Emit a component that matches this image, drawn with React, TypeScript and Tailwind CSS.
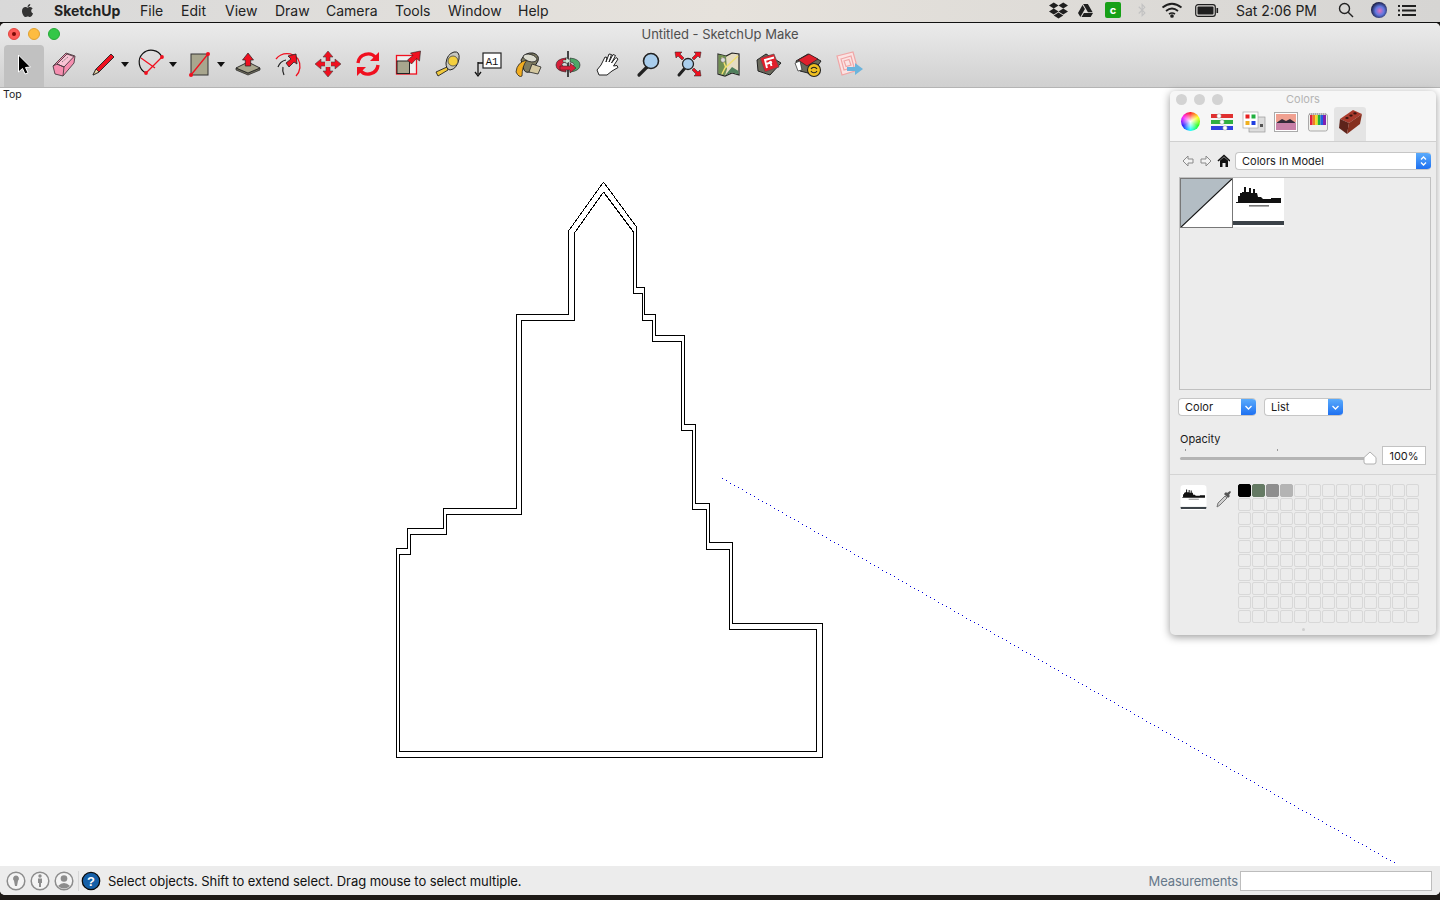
import React from "react";
import { FaApple, FaDropbox, FaGoogleDrive, FaBluetoothB } from "react-icons/fa";

const outer = "603.5,182 636.5,227 636.5,287.5 644.5,287.5 644.5,314.5 655.5,314.5 655.5,335.5 684.5,335.5 684.5,424.5 695.5,424.5 695.5,503.5 709.5,503.5 709.5,542.5 732.5,542.5 732.5,623.5 822.5,623.5 822.5,757.5 396.5,757.5 396.5,548.5 407.5,548.5 407.5,528.5 443.5,528.5 443.5,508.5 516.5,508.5 516.5,314.5 568.5,314.5 568.5,231 603.5,182";
const inner = "603.5,192 633.5,232 633.5,293.5 642.5,293.5 642.5,320.5 652.5,320.5 652.5,341.5 681.5,341.5 681.5,430.5 692.5,430.5 692.5,509.5 706.5,509.5 706.5,549.5 729.5,549.5 729.5,629.5 816.5,629.5 816.5,751.5 399.5,751.5 399.5,554.5 410.5,554.5 410.5,534.5 446.5,534.5 446.5,514.5 521.5,514.5 521.5,320.5 574.5,320.5 574.5,233 603.5,192";

const dots = Array.from({ length: 169 }, (_, i) => ({
  x: Math.round(722 + i * 4),
  y: Math.round(478 + i * 4 * (385 / 673)),
}));

const Ic = ({ children, s = 32 }: { children: React.ReactNode; s?: number }) => (
  <svg width={s} height={s} viewBox="0 0 32 32" className="block shrink-0">{children}</svg>
);

const R = "#f0101f";
const O = "#a8a68e";

const icons: Record<string, React.ReactNode> = {
  select: <path d="M10.5 7 L10.5 24 L14.5 20.5 L17 26 L20 24.8 L17.5 19.5 L22.5 19 Z" fill="#000" stroke="#fff" strokeWidth="1" />,
  eraser: <g stroke="#4a3a40" strokeWidth=".9"><path d="M5 18 L18 5 L27 8 L26 15 L15 28 L7 26 Z" fill="#f58fb0" /><path d="M9 16 L19 6 L26 8.5 L16 19 Z" fill="#f9c3d4" /><path d="M5 18 L9 16 L16 19 L15 28" fill="none" /><path d="M14 14 L20 9" stroke="#777" strokeDasharray="1.4 .8" /></g>,
  pencil: <g><path d="M5 27 L8 21 L23 6 L26 9 L11 24 Z" fill={R} stroke="#222" strokeWidth=".9" /><path d="M5 27 L8 21 L11 24 Z" fill="#e8d8a8" stroke="#222" strokeWidth=".8" /></g>,
  arc: <g fill="none"><path d="M10 25 A12 12 0 1 1 26 9" stroke="#111" strokeWidth="1.2" /><path d="M10 25 L26 9 M5 10 L19 20" stroke={R} strokeWidth="1.3" /><circle cx="10" cy="25" r="1.9" fill={R} /><circle cx="26" cy="9" r="1.9" fill={R} /></g>,
  rect: <g><rect x="7" y="6" width="17" height="21" fill={O} stroke="#333" strokeWidth="1" /><path d="M7 27 L24 6" stroke={R} strokeWidth="1.3" /><circle cx="7" cy="27" r="2" fill={R} /><circle cx="24" cy="6" r="2" fill={R} /></g>,
  push: <g><path d="M4 20 V22 L16 27 L28 22 V20 L16 25 Z" fill="#6f6d5c" stroke="#222" strokeWidth=".7" /><path d="M4 20 L16 14 L28 20 L16 25 Z" fill={O} stroke="#222" strokeWidth=".9" /><path d="M16 5 L21.5 12 H18.7 V18 H13.3 V12 H10.5 Z" fill={R} stroke="#222" strokeWidth=".7" /></g>,
  follow: <g fill="none"><path d="M4 11 A14 14 0 0 1 26 11 A14 14 0 0 1 24 28" stroke={R} strokeWidth="1.3" /><path d="M6 19 A11 11 0 0 1 14 12" stroke="#222" strokeWidth="1.2" /><path d="M12 27 A12 12 0 0 1 11 19" stroke="#222" strokeWidth="1.2" /><path d="M24 6 L25 16 L22 14 L17 19 L14 15 L19 11 L16 8 Z" fill={R} stroke="#222" strokeWidth=".8" /></g>,
  move: <g><path d="M16 3 L21 9 H18 V14 H23 V11 L29 16 L23 21 V18 H18 V23 H21 L16 29 L11 23 H14 V18 H9 V21 L3 16 L9 11 V14 H14 V9 H11 Z" fill={R} stroke="#444" strokeWidth=".6" /><rect x="13" y="13" width="6" height="6" fill="#cfcfc8" /></g>,
  rotate: <g fill="none" stroke={R} strokeWidth="3.4"><path d="M6 15 A10 10 0 0 1 24 10" /><path d="M26 17 A10 10 0 0 1 8 22" /><path d="M27 4 V13 H18 Z" fill={R} stroke="none" /><path d="M5 28 V19 H14 Z" fill={R} stroke="none" /></g>,
  scale: <g transform="translate(-1.5 0)"><rect x="6" y="7.5" width="20" height="18.5" fill="#eee" stroke={R} strokeWidth="1.3" /><rect x="6.5" y="13" width="12.5" height="12.5" fill={O} stroke="#222" strokeWidth="1" /><path d="M30 3 L29 13 L26 10.5 L21 16 L17 12 L22.5 7.5 L20 5 Z" fill={R} stroke="#222" strokeWidth=".6" /></g>,
  tape: <g transform="translate(-1 0)"><path d="M5 24 L16 19 L17 22 L7 28 Z" fill="#f0c93c" stroke="#222" strokeWidth=".9" /><path d="M15 15 Q16 6 23 4 Q29 3 28 11 Q26 21 19 22 Q15 21 15 15 Z" fill="#c8c8c0" stroke="#222" strokeWidth="1" /><circle cx="22" cy="13" r="5" fill="#f4d03f" stroke="#444" strokeWidth=".8" /></g>,
  text: <g><rect x="11" y="5" width="18" height="15" fill="#fff" stroke="#222" strokeWidth="1.2" /><text x="20" y="16.5" fontSize="10.5" textAnchor="middle" fontFamily="Liberation Mono" fill="#111">A1</text><path d="M6 14 V26 M3 24 L6 28 L9 24 M6 15 H11" stroke="#111" strokeWidth="1.3" fill="none" /></g>,
  paint: <g><path d="M9 12 Q13 4 21 5 Q28 7 26 13 L20 23 Q14 26 12 22 Z" fill="#7f7c60" stroke="#222" strokeWidth="1" /><ellipse cx="18" cy="10" rx="7" ry="3.6" fill="#dcdcd0" stroke="#222" strokeWidth=".8" transform="rotate(15 18 10)" /><path d="M4 24 Q5 14 15 12 Q10 18 10 28 Q7 30 4 24 Z" fill="#f2ad1f" stroke="#222" strokeWidth=".8" /><path d="M20 16 L29 19 L26 26 L17 24 Z" fill="#d4c8a0" stroke="#222" strokeWidth=".8" /></g>,
  orbit: <g><path d="M14 10 Q4 11 4 17 Q4 23 14 24 V19 Q10 19 10 16.5 Q10 14.5 14 14 Z" fill="#d8203a" stroke="#222" strokeWidth=".6" /><path d="M18 10 Q28 11 28 17 Q28 23 18 24 V19 Q22 19 22 16.5 Q22 14.5 18 14 Z" fill="#4ea868" stroke="#222" strokeWidth=".6" /><path d="M16 3 V29" stroke="#111" strokeWidth="1.5" /><path d="M8 18 H18 V15 L24 20 L18 25 V22 H8 Z" fill="#d8203a" stroke="#222" strokeWidth=".5" /><path d="M19 13 L14 9.5 V12 H11 V14 H14 V16 Z" fill="#cfe8d8" stroke="#222" strokeWidth=".4" /></g>,
  hand: <path d="M7 27 L5 22 L9 17 L13 9 L15 9.5 L14 14 L17 6 L19.5 6.5 L17 14 L21 6.5 L23.5 7.5 L19.5 15 L24 9.5 L26 11 L21.5 18 L25 17.5 L26 19.5 L20 23 L15 27 Z" fill="#fff" stroke="#222" strokeWidth="1" strokeLinejoin="round" />,
  zoom: <g><path d="M7 27 L15 19" stroke="#222" strokeWidth="3.2" strokeLinecap="round" /><circle cx="19" cy="13" r="7.5" fill="#a9cdec" stroke="#222" strokeWidth="1.6" /></g>,
  extents: <g><path d="M7 27 L13 20" stroke="#222" strokeWidth="3" strokeLinecap="round" /><circle cx="16" cy="16" r="5.5" fill="#a9cdec" stroke="#222" strokeWidth="1.3" /><path d="M3 4 L10 4 L8 6 L12 10 L10 12 L6 8 L4 10 Z M29 4 L22 4 L24 6 L20 10 L22 12 L26 8 L28 10 Z M29 28 L22 28 L24 26 L20 22 L22 20 L26 24 L28 22 Z" fill={R} stroke="#222" strokeWidth=".5" /></g>,
  map: <g><path d="M6 6 L14 8 L20 5 L27 6 V27 L20 25 L13 28 L6 26 Z" fill="#e5dcc2" stroke="#222" strokeWidth="1.2" /><path d="M6.5 6.5 L14 8 L15 21 L13 27.5 L6.5 25.5 Z" fill="#6f8f52" /><path d="M13 27.5 L20 19 L26.5 23 V26.5 L20 24.5 Z" fill="#4f7f5c" /><path d="M26 8 L13 20 L10 26 M10 9 L14 20" stroke="#f0e070" strokeWidth="1.5" fill="none" /><circle cx="11" cy="12" r="2.4" fill="#ddd" stroke="#555" strokeWidth=".5" /></g>,
  warehouse: <g><path d="M5 12 L14 6 L29 15 L18 27 L6 23 Z" fill="#6a6a5c" stroke="#222" strokeWidth="1" /><path d="M8 10 L22 6 L27 19 L13 24 Z" fill="#e0202c" stroke="#555" strokeWidth=".7" /><path d="M15 20 L13 12 L22 9.5 M14.2 16 L20 14 M19.5 18 L18 13" stroke="#fff" strokeWidth="1.9" fill="none" /></g>,
  ext: <g><path d="M4 13 L16 6 L29 13 L20 26 L8 23 Z" fill="#6a6a5c" stroke="#222" strokeWidth="1" /><path d="M6 12 L17 6 L26 11 L15 18 Z" fill="#e0202c" stroke="#222" strokeWidth=".7" /><path d="M3 15 L8 13 L10 22 L6 23 Z" fill="#fff" stroke="#222" strokeWidth=".7" /><circle cx="22" cy="22" r="6.5" fill="#f0c020" stroke="#222" strokeWidth="1.1" /><path d="M19 21 A3.4 3.4 0 0 1 25 21 M25 23 A3.4 3.4 0 0 1 19 23" stroke="#222" strokeWidth="1.1" fill="none" /></g>,
  layout: <g><path d="M5 8 L21 4 L26 22 L10 27 Z" fill="#fbe3e3" stroke="#f0a6a6" strokeWidth="1.2" /><path d="M9 11 L19 8 L22 19 L12 22 Z M12 13 L17 11.5 L19 17 L14 18.5 Z" fill="none" stroke="#f0a6a6" strokeWidth="1.2" /><path d="M15 19 H23 V15 L31 21 L23 27 V23 H15 Z" fill="#6cb4dc" /></g>,
};

const tools: [string, boolean][] = [
  ["eraser", false], ["pencil", true], ["arc", true], ["rect", true], ["push", false], ["follow", false], ["move", false],
  ["rotate", false], ["scale", false], ["tape", false], ["text", false], ["paint", false], ["orbit", false], ["hand", false],
  ["zoom", false], ["extents", false], ["map", false], ["warehouse", false], ["ext", false], ["layout", false],
];

const menus = [
  ["File", "w-[41px]"], ["Edit", "w-[44px]"], ["View", "w-[50px]"], ["Draw", "w-[51px]"], ["Camera", "w-[69px]"],
  ["Tools", "w-[53px]"], ["Window", "w-[70px]"], ["Help", "w-[40px]"],
];

const Thumb = ({ small }: { small?: boolean }) => (
  <svg viewBox="0 0 51 49" className={small ? "w-[27px] h-[25px] block" : "w-[51px] h-[49px] block"}>
    <rect width="51" height="49" fill="#fff" />
    <path d="M3 25 H48 V20 H38 V21 H30 L28 19 H25 L24 15 H22 V11 H20 V15 H18 V10 H16 V14 H13 V9 H11 V14 H9 V15 H7 V18 H5 V24 H3 Z" fill="#111" />
    <rect x="16" y="27" width="20" height="1.6" fill="#777" />
    <rect x="0" y="43" width="51" height="4" fill="#3b4248" />
  </svg>
);

const Select = ({ label, cls, chevron }: { label: string; cls: string; chevron: "both" | "down" }) => (
  <div className={`flex items-center shrink-0 h-[18px] rounded-[4px] bg-white border border-r-0 border-[#c6c6c6] overflow-hidden ${cls}`}>
    <span className="flex-1 pl-[6px] text-[11px] leading-none text-[#1a1a1a]">{label}</span>
    <span className="w-[15px] h-[18px] bg-gradient-to-b from-[#5eaefc] to-[#1a6cf0] flex items-center justify-center">
      <svg width="9" height="12" viewBox="0 0 9 12" fill="none" stroke="#fff" strokeWidth="1.3">
        {chevron === "both" ? <path d="M2 4.5 L4.5 2 L7 4.5 M2 7.5 L4.5 10 L7 7.5" /> : <path d="M1.5 5 L4.5 8 L7.5 5" />}
      </svg>
    </span>
  </div>
);

const grid = Array.from({ length: 130 }, (_, i) => i);
const swatch = ["bg-black border-black", "bg-[#657a64] border-[#657a64]", "bg-[#8e8e8e] border-[#8e8e8e]", "bg-[#b4b4b4] border-[#b4b4b4]"];

const ColorsPanel = () => (
  <div className="absolute left-[1170px] top-[91px] w-[266px] h-[544px] rounded-[5px] bg-[#ececec] shadow-[0_2px_8px_rgba(0,0,0,0.4)] text-[#1a1a1a] flex flex-col">
    <div className="h-[51px] shrink-0 bg-[#f6f6f6] border-b border-[#d0d0d0] rounded-t-[5px] flex flex-col">
      <div className="relative h-[16px] flex items-center pl-[6px] gap-[7px]">
        <span className="w-[11px] h-[11px] rounded-full bg-[#d3d3d3]" />
        <span className="w-[11px] h-[11px] rounded-full bg-[#d3d3d3]" />
        <span className="w-[11px] h-[11px] rounded-full bg-[#d3d3d3]" />
        <span className="absolute left-0 right-0 text-center text-[11px] text-[#b4b4b4]">Colors</span>
      </div>
      <div className="flex items-end flex-1 pl-[4px]">
        <div className="w-[32px] h-[34px] pb-[5px] flex items-center justify-center">
          <span className="w-[19px] h-[19px] rounded-full bg-[radial-gradient(circle,white_0%,transparent_75%),conic-gradient(red,yellow,lime,cyan,blue,magenta,red)]" />
        </div>
        <div className="w-[32px] h-[34px] pb-[5px] flex items-center justify-center">
          <svg width="24" height="20" viewBox="0 0 24 20"><rect x="1" y="2" width="22" height="4" fill="#e03030" /><rect x="1" y="8" width="22" height="4" fill="#30b040" /><rect x="1" y="14" width="22" height="4" fill="#3040e0" /><circle cx="9" cy="4" r="2.2" fill="#fff" stroke="#999" strokeWidth=".5" /><circle cx="12" cy="10" r="2.2" fill="#fff" stroke="#999" strokeWidth=".5" /><circle cx="15" cy="16" r="2.2" fill="#fff" stroke="#999" strokeWidth=".5" /></svg>
        </div>
        <div className="w-[32px] h-[34px] pb-[5px] flex items-center justify-center">
          <svg width="24" height="22" viewBox="0 0 24 22"><rect x="7" y="6" width="16" height="15" fill="#ddd" stroke="#999" strokeWidth=".7" /><rect x="1" y="1" width="15" height="16" fill="#fff" stroke="#aaa" strokeWidth=".7" /><rect x="3.5" y="3.5" width="4" height="4" fill="#e82020" /><rect x="9.5" y="3.5" width="4" height="4" fill="#20b040" /><rect x="3.5" y="10" width="4" height="4" fill="#f0b020" /><rect x="9.5" y="10" width="4" height="4" fill="#2040e0" /><rect x="18" y="13" width="3" height="3" fill="#555" /></svg>
        </div>
        <div className="w-[32px] h-[34px] pb-[5px] flex items-center justify-center">
          <svg width="24" height="20" viewBox="0 0 24 20"><rect x=".5" y=".5" width="23" height="19" fill="#fff" stroke="#aaa" /><rect x="2" y="2" width="20" height="8" fill="#f0a090" /><path d="M2 11 L8 7 L12 9 L16 7 L22 11 Z" fill="#352a3a" /><rect x="2" y="11" width="20" height="7" fill="#c880a8" /></svg>
        </div>
        <div className="w-[32px] h-[34px] pb-[5px] flex items-center justify-center">
          <svg width="20" height="20" viewBox="0 0 20 20"><rect x=".5" y="2" width="19" height="17" rx="2" fill="#f0f0ec" stroke="#aaa" /><rect x="2" y="3" width="2.6" height="10" fill="#e02040" /><rect x="4.6" y="3" width="2.6" height="10" fill="#f08020" /><rect x="7.2" y="3" width="2.6" height="10" fill="#f0e020" /><rect x="9.8" y="3" width="2.6" height="10" fill="#20b040" /><rect x="12.4" y="3" width="2.6" height="10" fill="#2060e0" /><rect x="15" y="3" width="3" height="10" fill="#8020b0" /><path d="M1 2 H19" stroke="#888" strokeDasharray="1 1" /></svg>
        </div>
        <div className="w-[32px] h-[34px] pb-[5px] bg-[#e4e4e4] rounded-t-[3px] flex items-center justify-center">
          <svg width="26" height="26" viewBox="0 0 26 26"><path d="M3 10 L16 1 L25 5 L12 14 Z" fill="#a93a2c" /><path d="M3 10 L12 14 L10 25 L2 19 Z" fill="#5e241b" /><path d="M12 14 L25 5 L23 15 L10 25 Z" fill="#86301f" /><ellipse cx="10" cy="9" rx="1.7" ry="1.1" fill="#3a1410" /><ellipse cx="14" cy="6.6" rx="1.7" ry="1.1" fill="#3a1410" /><ellipse cx="18" cy="4.4" rx="1.7" ry="1.1" fill="#3a1410" /></svg>
        </div>
      </div>
    </div>

    <div className="flex flex-col px-[9px] pt-[10px]">
      <div className="flex items-center h-[18px]">
        <svg width="50" height="14" viewBox="0 0 50 14" className="shrink-0 ml-[1px]">
          <path d="M3 7 L8 2 V5 H13 V9 H8 V12 Z" fill="#f2f2f2" stroke="#8a8a8a" />
          <path d="M31 7 L26 2 V5 H21 V9 H26 V12 Z" fill="#f2f2f2" stroke="#8a8a8a" />
          <path d="M38 7 L44 1.5 L50 7" fill="none" stroke="#111" strokeWidth="1.6" />
          <path d="M40 6.5 L44 3 L48 6.5 V13 H45.5 V9 H42.5 V13 H40 Z" fill="#111" />
        </svg>
        <Select label="Colors In Model" cls="w-[196px] ml-[5px]" chevron="both" />
      </div>
      <div className="mt-[7px] h-[213px] w-[252px] border border-[#c0c0c0] flex items-start">
        <svg width="53" height="50" viewBox="0 0 53 50" className="block shrink-0">
          <rect x=".5" y=".5" width="52" height="49" fill="#fff" />
          <path d="M0 0 H53 L0 50 Z" fill="#b3bdc4" />
          <path d="M0 50 L53 0" stroke="#111" strokeWidth="1.2" />
          <rect x=".5" y=".5" width="52" height="49" fill="none" stroke="#777" />
        </svg>
        <Thumb />
      </div>
      <div className="mt-[8px] flex gap-[8px] -ml-[1px]">
        <Select label="Color" cls="w-[78px]" chevron="down" />
        <Select label="List" cls="w-[79px]" chevron="down" />
      </div>
      <div className="mt-[16px] text-[11px] leading-[14px] text-[#1a1a1a] ml-[1px]">Opacity</div>
      <div className="flex items-center ml-[1px]">
        <div className="relative w-[196px] h-[19px]">
          <span className="absolute left-[5px] top-[3px] w-px h-[2px] bg-[#999]" />
          <span className="absolute left-[97px] top-[3px] w-px h-[2px] bg-[#999]" />
          <div className="absolute left-0 right-0 top-[11px] h-[3px] rounded-full bg-[#b4b4b4]" />
          <svg width="14" height="14" viewBox="0 0 14 14" className="absolute left-[183px] top-[5px]">
            <path d="M7 1 L13 6.5 V11 Q13 13 11 13 H3 Q1 13 1 11 V6.5 Z" fill="#fff" stroke="#b0b0b0" />
          </svg>
        </div>
        <div className="ml-[6px] w-[44px] h-[19px] pt-px bg-white border border-[#c2c2c2] flex items-center justify-center text-[11px]">100%</div>
      </div>
    </div>
    <div className="mt-[9px] border-t border-[#d4d4d4] flex pt-[9px]">
      <div className="w-[68px] flex items-start shrink-0">
        <div className="ml-[10px] mt-px rounded-[4px] overflow-hidden w-[27px] h-[25px]"><Thumb small /></div>
        <svg width="18" height="20" viewBox="0 0 18 20" className="ml-[8px] mt-[5px]">
          <path d="M2 18 L3 14 L10 7 L12 9 L5 16 Z" fill="#d0d0d0" stroke="#777" />
          <path d="M9 5 L13 9 L15 7 L14 6 L16 3 L15 2 L12 4 L11 3 Z" fill="#555" />
        </svg>
      </div>
      <div className="grid grid-cols-[repeat(13,13px)] gap-[1px]">
        {grid.map((i) => (
          <span key={i} className={`w-[13px] h-[13px] rounded-[2px] border ${swatch[i] ?? "border-[#d8d8d8]"}`} />
        ))}
      </div>
    </div>
    <div className="mt-[5px] flex justify-center"><span className="w-[3px] h-[3px] rounded-full bg-[#cfcfcf]" /></div>
  </div>
);

const StatusIcon = ({ children }: { children: React.ReactNode }) => (
  <svg width="20" height="20" viewBox="0 0 20 20" className="block shrink-0">
    <circle cx="10" cy="10" r="8.8" fill="#f4f4f4" stroke="#8d8d8d" strokeWidth="1.5" />
    {children}
  </svg>
);

export default function App() {
  return (
    <div className="relative w-[1440px] h-[900px] overflow-hidden bg-[#1e1a17] font-[Inter,sans-serif] flex flex-col pb-[5px]">
      <header className="h-[22px] shrink-0 pb-[2px] flex items-center bg-gradient-to-r from-[#d9d9d9] via-[#e6e2dc] to-[#d6d5d3] text-[14px] text-[#222]">
        <div className="w-[54px] pl-[20px] flex items-center"><FaApple size={15} color="#333" /></div>
        <span className="font-bold w-[86px]">SketchUp</span>
        {menus.map(([m, w]) => <span key={m} className={w}>{m}</span>)}
        <div className="ml-auto flex items-center">
          <FaDropbox size={19} color="#1f1f1f" />
          <FaGoogleDrive size={15} color="#1f1f1f" className="ml-[10px]" />
          <span className="ml-[12px] w-[16px] h-[16px] rounded-[2px] bg-[#17a017] text-white text-[11px] leading-[16px] text-center font-bold">c</span>
          <FaBluetoothB size={14} color="#c2c2c2" className="ml-[14px]" />
          <svg width="22" height="16" viewBox="0 0 22 16" className="ml-[12px]" fill="none" stroke="#1f1f1f" strokeWidth="1.7">
            <path d="M1.5 5.5 Q11 -2 20.5 5.5 M5 9 Q11 4 17 9 M8 12 Q11 10 14 12" /><circle cx="11" cy="14" r="1" fill="#1f1f1f" />
          </svg>
          <svg width="24" height="13" viewBox="0 0 24 13" className="ml-[12px]">
            <rect x=".7" y=".7" width="19.6" height="11.6" rx="2.4" fill="none" stroke="#1f1f1f" strokeWidth="1.2" /><rect x="2.5" y="2.5" width="16" height="8" rx="1" fill="#1f1f1f" /><rect x="21.5" y="4" width="1.6" height="5" fill="#1f1f1f" />
          </svg>
          <span className="ml-[17px] w-[83px]">Sat 2:06 PM</span>
          <svg width="16" height="16" viewBox="0 0 16 16" className="ml-[19px]" fill="none" stroke="#222" strokeWidth="1.4">
            <circle cx="6.5" cy="6.5" r="5" /><path d="M10.2 10.2 L15 15" />
          </svg>
          <span className="ml-[17px] w-[16px] h-[16px] rounded-full bg-[radial-gradient(circle_at_55%_55%,#e070c0_0%,#6078e0_35%,#101030_75%)]" />
          <svg width="18" height="11" viewBox="0 0 18 11" className="ml-[11px] mr-[24px]" fill="#1f1f1f">
            <rect x="0" y="0" width="2" height="2" /><rect x="4" y="0" width="14" height="2" /><rect x="0" y="4.5" width="2" height="2" /><rect x="4" y="4.5" width="14" height="2" /><rect x="0" y="9" width="2" height="2" /><rect x="4" y="9" width="14" height="2" />
          </svg>
        </div>
      </header>
      <div className="h-px shrink-0 bg-[#111]" />

      <main className="flex-1 flex flex-col rounded-[5px] overflow-hidden bg-white">
        <div className="h-[65px] shrink-0 bg-gradient-to-b from-[#ebebeb] to-[#d0d0d0] border-b border-[#b4b4b4] flex flex-col">
          <div className="relative h-[22px] shrink-0 flex items-center pl-[8px] gap-[8px]">
            <span className="w-[12px] h-[12px] rounded-full bg-[#fc5b57] border border-[#e2463f] flex items-center justify-center"><span className="w-[4px] h-[4px] rounded-full bg-[#7a0b06]" /></span>
            <span className="w-[12px] h-[12px] rounded-full bg-[#fdbc40] border border-[#e0a030]" />
            <span className="w-[12px] h-[12px] rounded-full bg-[#33c748] border border-[#25a936]" />
            <span className="absolute left-0 right-0 pt-[2px] text-center text-[13px] tracking-[-0.03px] text-[#4e4e4e]">Untitled - SketchUp Make</span>
          </div>
          <div className="flex items-stretch flex-1 pl-[4px]">
            <div className="w-[40px] pb-[4px] bg-[#c1c1c1] rounded-t-[4px] flex items-center justify-center"><Ic>{icons.select}</Ic></div>
            {tools.map(([n, drop]) => (
              <div key={n} className={`relative flex items-center pl-[4px] pb-[4px] ${drop ? "w-[48px]" : "w-[40px]"}`}>
                <Ic>{icons[n]}</Ic>
                {drop && <span className="ml-[1px] w-0 h-0 border-x-[4.5px] border-x-transparent border-t-[5px] border-t-[#111]" />}
              </div>
            ))}
          </div>
        </div>

        <div className="relative flex-1 bg-white">
          <span className="absolute left-[3px] top-0 text-[10.5px] leading-[13px] text-[#222]">Top</span>
          <svg width="1440" height="778" viewBox="0 88 1440 778" className="absolute inset-0" fill="none">
            <polyline points={outer} stroke="#000" shapeRendering="crispEdges" />
            <polyline points={inner} stroke="#000" shapeRendering="crispEdges" />
            {dots.map((d) => <rect key={d.x} x={d.x} y={d.y} width="1" height="1" fill="#0000d8" />)}
          </svg>
        </div>

        <footer className="h-[29px] shrink-0 bg-[#ececec] flex items-center pl-[6px]">
          <div className="flex gap-[4px]">
            <StatusIcon><path d="M10 4.5 a3 3 0 0 1 2 5.2 L11 15 H9 L8 9.7 A3 3 0 0 1 10 4.5 Z" fill="#8d8d8d" /></StatusIcon>
            <StatusIcon><circle cx="10" cy="5" r="1.7" fill="#8d8d8d" /><path d="M8 7.5 H12 V12 H11 V16 H9 V12 H8 Z" fill="#8d8d8d" /></StatusIcon>
            <StatusIcon><circle cx="10" cy="7.5" r="3.3" fill="#8d8d8d" /><path d="M4 15 Q10 9 16 15 Q10 20 4 15 Z" fill="#8d8d8d" /></StatusIcon>
          </div>
          <span className="w-px h-[20px] bg-[#d6d6d6] ml-[4px]" />
          <svg width="20" height="20" viewBox="0 0 20 20" className="ml-[2px]">
            <circle cx="10" cy="10" r="8.7" fill="#1560a8" stroke="#0a0a0a" strokeWidth="1.3" />
            <text x="10" y="14.5" fontSize="13" fontWeight="700" textAnchor="middle" fill="#fff" fontFamily="Liberation Sans">?</text>
          </svg>
          <span className="ml-[7px] pt-[2px] text-[13px] tracking-[-0.06px] text-[#111]">Select objects. Shift to extend select. Drag mouse to select multiple.</span>
          <span className="ml-auto pt-[2px] text-[13px] tracking-[-0.15px] text-[#66788a]">Measurements</span>
          <div className="ml-[2px] mr-[8px] w-[192px] h-[20px] bg-white border border-[#bdbdbd]" />
        </footer>
      </main>
      <ColorsPanel />
    </div>
  );
}
